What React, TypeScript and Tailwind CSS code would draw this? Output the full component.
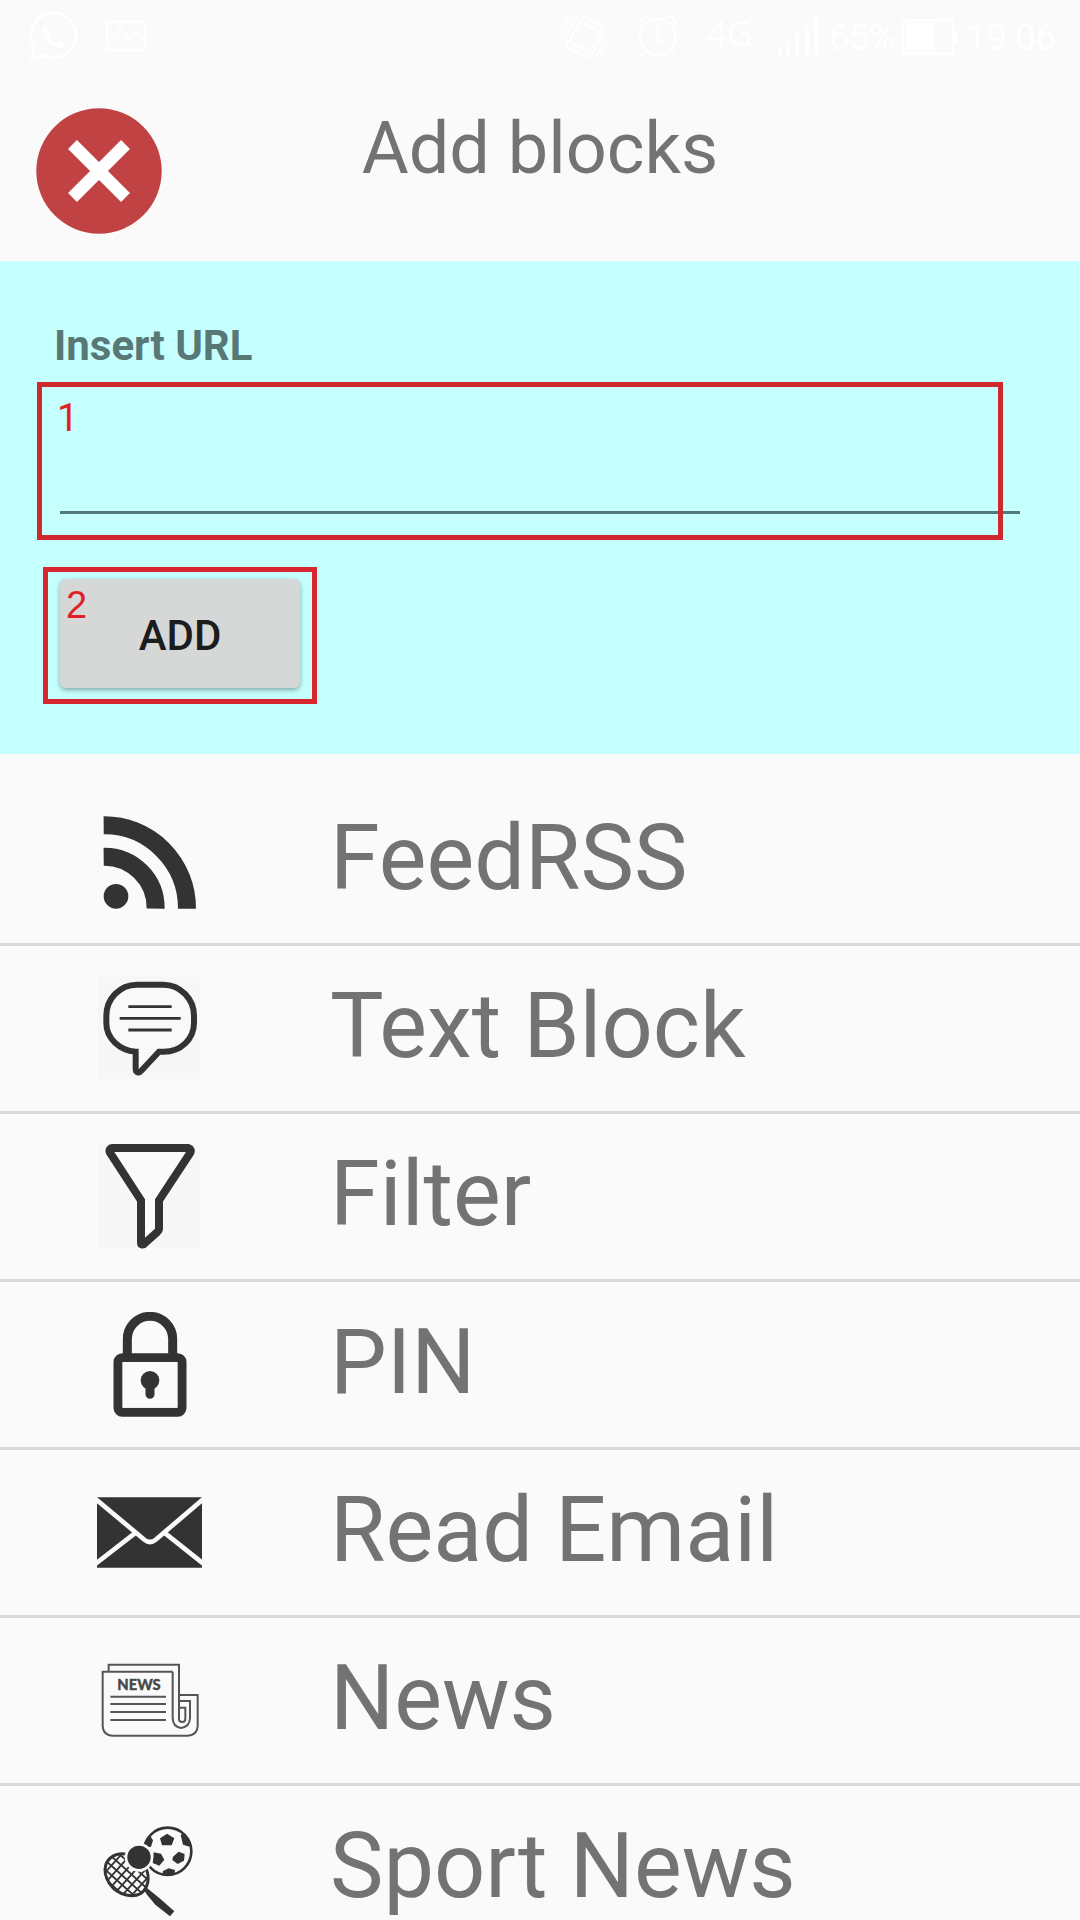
import type { ReactNode } from "react";

const INK = "#333333";

function StatusBar() {
  return (
    <div className="h-[74px] shrink-0 overflow-hidden">
      <div className="flex h-[74px] w-[1080px] items-start text-white">
        <svg className="ml-[28px] mt-[10px] h-[52px] w-[52px]" viewBox="84 30 156 156" fill="none" stroke="#fff">
          <path d="M94 176 L103 141 A67 67 0 1 1 130 166 Z" strokeWidth="9" />
          <path d="M127 86c5-12 15-10 18-3l6 15c1 4-5 8-5 11 5 10 13 17 23 20 5-1 7-8 11-8l15 8c2 10-9 16-18 15-25-4-52-32-50-58z" fill="#fff" stroke="none" />
        </svg>
        <svg className="ml-[26px] mt-[20px] h-[32px] w-[40px]" viewBox="318 60 120 96" fill="none" stroke="#fff" strokeWidth="6">
          <rect x="322" y="65" width="112" height="86" rx="8" />
          <path d="M324 122 L360 87 L388 116 L408 99 L432 121" />
        </svg>
        <svg className="ml-[415px] mt-[13px] h-[48px] w-[48px]" viewBox="64 38 140 140" fill="none" stroke="#fff" strokeWidth="6">
          <path d="M130 48 L183 77 Q188 80 185 85 L139 165 Q136 169 132 166 L82 139 Q78 136 81 132 L125 51 Z M122 65 L175 94 M90 122 L143 151" />
          <path d="M114 44 L72 117 M98 44 L66 103 M82 52 L66 78 M198 110 L165 169 M188 96 L149 166 M203 125 L181 163" strokeWidth="5" />
        </svg>
        <svg className="ml-[28px] mt-[13px] h-[46px] w-[42px]" viewBox="282 38 122 134" fill="none" stroke="#fff" strokeWidth="6">
          <circle cx="342" cy="108" r="52" />
          <path d="M341 78 V112 L359 127 M303 154 L290 168 M382 154 L396 168 M292 79 C281 57 305 38 328 55 M392 79 C404 57 379 38 357 55" />
        </svg>
        <span className="ml-[28px] mt-[9px] w-[46px] whitespace-nowrap font-['Noto_Sans'] text-[35px] leading-[48px]">4G</span>
        <svg className="ml-[23px] mt-[18px] h-[38px] w-[44px]" viewBox="684 52 128 112" fill="#fff">
          <path d="M688 142h12v21h-12z M714 120h12v43h-12z M741 97h11v66h-11z M768 75h12v88h-12z M796 52h12v111h-12z" />
        </svg>
        <span className="ml-[9px] mt-[14px] w-[66px] whitespace-nowrap text-[37px] leading-[48px] tracking-[-1px]">65%</span>
        <svg className="ml-[7px] mt-[19px] h-[36px] w-[56px]" viewBox="1055 55 163 105" fill="#fff">
          <path d="M1056 56h151v35h8v35h-8v33h-151z M1062 62v90h138v-90z" fillRule="evenodd" />
          <path d="M1065 68h85v79h-85z" />
        </svg>
        <span className="ml-[8px] mt-[14px] whitespace-nowrap text-[37px] leading-[48px] tracking-[-0.5px]">19:06</span>
      </div>
    </div>
  );
}

function Icon({ box, children }: { box: string; children: ReactNode }) {
  return (
    <svg className="h-[105px] w-[105px] shrink-0" viewBox={box} fill="none" stroke={INK}>
      {children}
    </svg>
  );
}

const rssIcon = (
  <Icon box="51 54 315 315">
    <circle cx="108" cy="319" r="37" fill={INK} stroke="none" />
    <path d="M71 200 A154 154 0 0 1 227 356 M71 106 A248 249 0 0 1 321 356" strokeWidth="54" />
  </Icon>
);

const textIcon = (
  <Icon box="51 78 315 315">
    <path d="M54 80h309v309H54z" fill="#f7f7f7" stroke="none" />
    <path d="M167 305 C118 302 79 264 79 220 V197 C79 147 119 104 171 104 H250 C301 104 342 147 342 197 V218 C342 267 303 305 251 305 H237 L184 362 C177 371 167 368 167 357 Z" fill="#f9f9f9" strokeWidth="18" />
    <path d="M145 170H275 M119 205H302 M145 240H275" strokeWidth="8.5" />
  </Icon>
);

const filterIcon = (
  <Icon box="51 72 315 315">
    <path d="M54 72h309v312H54z" fill="#f7f7f7" stroke="none" />
    <path d="M98 84 H325 C332 86 334 92 331 98 L237 241 V327 Q237 332 232 336 L194 370 C189 376 183 374 183 369 V241 L90 98 C86 91 91 84 98 84 Z" fill="#fafafa" strokeWidth="24" />
  </Icon>
);

const lockIcon = (
  <Icon box="51 66 315 315">
    <rect x="114" y="203" width="192" height="164" rx="13" strokeWidth="27" />
    <path d="M128 216H292V353H128Z" fill="#fafafa" stroke="none" />
    <path d="M142 200 V147 A68 68 0 0 1 278 147 V200" strokeWidth="27" />
    <circle cx="210" cy="271" r="28" fill={INK} stroke="none" />
    <path d="M210 275V313" strokeWidth="27" strokeLinecap="round" />
  </Icon>
);

const mailIcon = (
  <Icon box="51 60 315 315">
    <path d="M51 112H366V323H51Z" fill={INK} stroke="none" />
    <path d="M47 117 L194 240 Q210 252 226 240 L370 117 M47 311 L168 217 M370 311 L252 217" stroke="#fafafa" strokeWidth="14" />
  </Icon>
);

const newsIcon = (
  <Icon box="51 54 315 315">
    <g stroke="#555555" strokeWidth="6">
      <path d="M86 125 V104 H297 V267 Q297 276 307 276 Q316 276 316 266 V233 H298" />
      <path d="M278 125 H68 V289 Q70 315 97 317 H323 Q351 315 353 289 V195 H298" />
      <path d="M278 125 V265 Q279 291 303 294 Q329 291 330 265 V213 H298" />
      <path d="M91 200H258 M91 222H258 M91 246H258 M91 270H258" />
    </g>
    <text x="112" y="179" textLength="130" lengthAdjust="spacingAndGlyphs" fill="#484848" stroke="#484848" strokeWidth="1" fontFamily="Lato, sans-serif" fontWeight="900" fontSize="43">NEWS</text>
  </Icon>
);

const racketHead =
  "M78 252 C91 223 125 213 160 229 C191 242 210 275 203 308 C196 339 173 352 139 345 C97 336 66 292 78 252Z";

const sportIcon = (
  <Icon box="51 108 315 315">
    <defs>
      <clipPath id="ball"><circle cx="263" cy="214" r="73" /></clipPath>
      <clipPath id="racket"><path d={racketHead} /></clipPath>
    </defs>
    <circle cx="263" cy="214" r="71" strokeWidth="8" />
    <g clipPath="url(#ball)" fill={INK} stroke="none">
      <path d="M261 161 L283 175 L275 196 H246 L240 175Z M302 165 L318 155 L340 180 L329 200 L309 194Z M192 174 L209 165 L219 181 L213 200 L190 205Z M221 217 L243 221 L253 239 L238 257 L218 249Z M296 215 L314 222 L312 242 L293 252 L277 240 L279 230Z M249 273 L266 265 L285 270 L283 290 H246Z" />
    </g>
    <g clipPath="url(#racket)" strokeWidth="5.5">
      <path
        transform="translate(140 285) rotate(42)"
        d="M-100 -53H100 M-100 -32H100 M-100 -11H100 M-100 10H100 M-100 31H100 M-100 52H100 M-74 -90V90 M-53 -90V90 M-32 -90V90 M-11 -90V90 M10 -90V90 M31 -90V90 M52 -90V90"
      />
    </g>
    <path d={racketHead} strokeWidth="9" />
    <circle cx="177" cy="232" r="39" fill={INK} stroke="#fafafa" strokeWidth="8" />
    <path d="M190 326 L200 323 L211 332 L238 354 L283 394 L270 409 L226 374 L201 344Z" fill={INK} stroke="none" />
  </Icon>
);

const blocks = [
  { label: "FeedRSS", icon: rssIcon },
  { label: "Text Block", icon: textIcon },
  { label: "Filter", icon: filterIcon },
  { label: "PIN", icon: lockIcon },
  { label: "Read Email", icon: mailIcon },
  { label: "News", icon: newsIcon },
  { label: "Sport News", icon: sportIcon },
];

export default function App() {
  return (
    <div className="flex h-[1920px] w-[1080px] flex-col overflow-hidden bg-[#fafafa] font-['Roboto',sans-serif]">
      <StatusBar />
      <header className="grid h-[187px] shrink-0 grid-cols-[200px_1fr_200px] items-start">
        <button className="ml-9 mt-[34px] h-[126px] w-[126px]" aria-label="Close">
          <svg className="h-full w-full" viewBox="0 0 126 126">
            <circle cx="63" cy="63" r="62.7" fill="#c04242" />
            <path d="M36.5 36.5 L89.5 89.5 M89.5 36.5 L36.5 89.5" stroke="#fff" strokeWidth="12.6" />
          </svg>
        </button>
        <h1 className="mt-[33px] text-center text-[72px] leading-[84px] text-[#737373]">Add blocks</h1>
      </header>

      <section className="relative h-[493px] shrink-0 bg-[#c5fffe] px-[54px] pt-[60px]">
        <label className="block text-[42px] font-bold leading-[50px] text-[#587876]">Insert URL</label>
        <div className="mx-1.5 h-[143px] border-b-[3px] border-[#527a78]" />
        <button className="ml-1.5 mt-[65px] flex h-[109px] w-[240px] items-center justify-center rounded-[6px] bg-[#d6d7d7] pt-[5px] text-[42px] font-medium leading-[50px] text-[#1c1c1c] shadow-[0_2px_5px_rgba(0,0,0,0.35)]">
          ADD
        </button>

        <div className="absolute left-[37px] top-[121px] h-[158px] w-[966px] border-[5px] border-[#d0282f] pl-[15px] pt-[9px] text-[38px] leading-[44px] text-[#e01f27]">
          1
        </div>
        <div className="absolute left-[43px] top-[306px] h-[137px] w-[274px] border-[5px] border-[#d7262d] pl-[18px] pt-[11px] font-['Liberation_Sans',sans-serif] text-[38px] leading-[44px] text-[#e01f27]">
          2
        </div>
      </section>

      <ul className="mt-6 shrink-0">
        {blocks.map((block) => (
          <li key={block.label} className="flex h-[168px] items-center border-b-[3px] border-[#dadada] pl-[97px]">
            {block.icon}
            <span className="ml-32 whitespace-nowrap pb-[3px] text-[90px] leading-[106px] text-[#737373]">{block.label}</span>
          </li>
        ))}
      </ul>
    </div>
  );
}
